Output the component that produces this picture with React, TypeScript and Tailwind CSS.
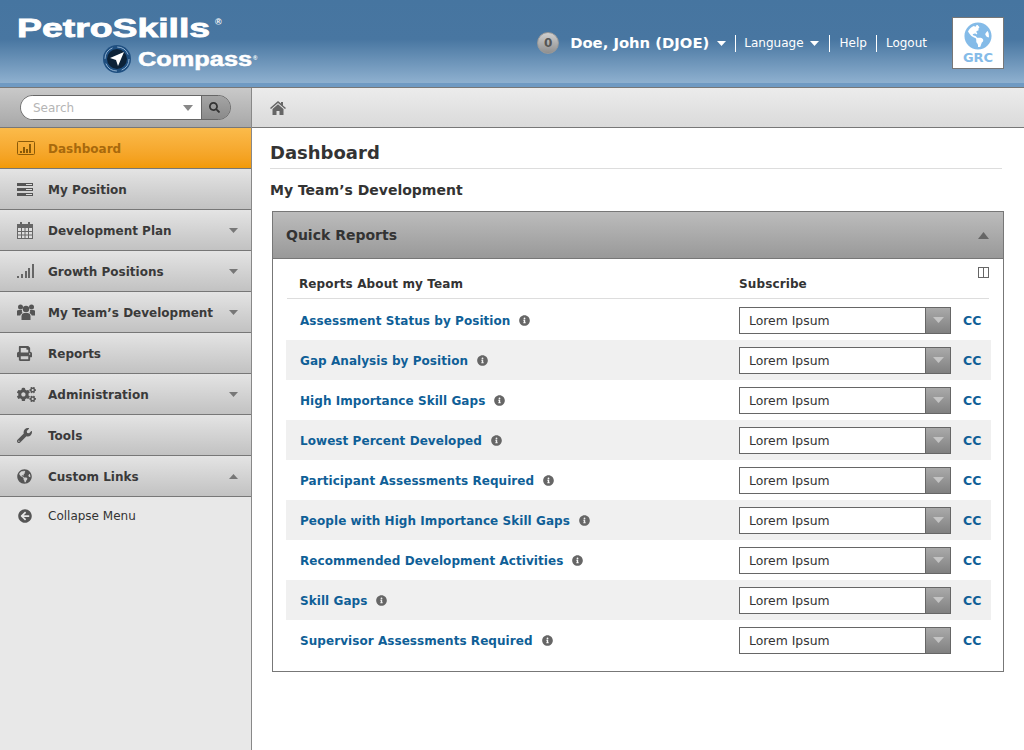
import React from 'react'
import { FaPrint, FaCogs, FaWrench, FaGlobeAmericas, FaArrowCircleLeft, FaInfoCircle, FaSearch } from 'react-icons/fa'

const reports = [
  'Assessment Status by Position',
  'Gap Analysis by Position',
  'High Importance Skill Gaps',
  'Lowest Percent Developed',
  'Participant Assessments Required',
  'People with High Importance Skill Gaps',
  'Recommended Development Activities',
  'Skill Gaps',
  'Supervisor Assessments Required',
]

function Caret({ up, w = 9, h = 5, color = '#777' }: { up?: boolean; w?: number; h?: number; color?: string }) {
  return (
    <svg width={w} height={h} viewBox="0 0 10 6" preserveAspectRatio="none" className="shrink-0">
      <path d={up ? 'M0 6 L5 0 L10 6 Z' : 'M0 0 L10 0 L5 6 Z'} fill={color} />
    </svg>
  )
}

function ChartIcon() {
  return (
    <svg width="18" height="15" viewBox="0 0 18 15">
      <rect x="0.5" y="0.5" width="17" height="13" rx="1" fill="none" stroke="#8a5a08" />
      <rect x="3" y="10" width="2" height="2" fill="#8a5a08" />
      <rect x="6" y="6" width="2" height="6" fill="#8a5a08" />
      <rect x="9" y="8" width="2" height="4" fill="#8a5a08" />
      <rect x="12" y="3" width="2" height="9" fill="#8a5a08" />
    </svg>
  )
}

function PositionIcon() {
  return (
    <svg width="16" height="13" viewBox="0 0 16 13" fill="#555">
      <rect width="16" height="3" />
      <rect y="5" width="16" height="3" />
      <rect y="10" width="16" height="3" />
      <rect x="9" y="1" width="6" height="1" fill="#ddd" />
      <rect x="9" y="6" width="6" height="1" fill="#ddd" />
      <rect x="9" y="11" width="6" height="1" fill="#ddd" />
    </svg>
  )
}

function CalendarIcon() {
  return (
    <svg width="16" height="17" viewBox="0 0 16 17">
      <rect x="0.5" y="2.5" width="15" height="14" fill="#ddd" stroke="#666" />
      <rect x="1" y="3" width="14" height="3" fill="#666" />
      <rect x="3" y="0" width="2" height="4" fill="#666" />
      <rect x="11" y="0" width="2" height="4" fill="#666" />
      <path d="M4.5 6V16M8 6V16M11.5 6V16M1 9.5H15M1 13H15" stroke="#666" />
    </svg>
  )
}

function SignalIcon() {
  return (
    <svg width="17" height="14" viewBox="0 0 17 14" fill="#666">
      <rect x="0" y="12" width="2" height="2" />
      <rect x="4" y="10" width="2" height="4" />
      <rect x="8" y="7" width="2" height="7" />
      <rect x="11" y="4" width="2" height="10" />
      <rect x="15" y="0" width="2" height="14" />
    </svg>
  )
}

function TeamIcon() {
  return (
    <svg width="18" height="16" viewBox="0 0 18 16" fill="#555">
      <circle cx="3.5" cy="3" r="2.5" />
      <circle cx="14.5" cy="3" r="2.5" />
      <circle cx="9" cy="5" r="3.2" />
      <path d="M0 7 Q0 6 2 6 H5 Q4.5 8 5.5 9 Q3.5 10 3.2 11.5 H0 Z" />
      <path d="M18 7 Q18 6 16 6 H13 Q13.5 8 12.5 9 Q14.5 10 14.8 11.5 H18 Z" />
      <path d="M4.5 12 Q4.5 9.5 7 9 H11 Q13.5 9.5 13.5 12 V16 H4.5 Z" />
    </svg>
  )
}

function HomeIcon() {
  return (
    <svg width="16" height="14" viewBox="0 0 16 14" fill="#666">
      <path d="M8 0 L11 2.6 V1 H13 V4.4 L16 7 L15 8 L8 2 L1 8 L0 7 Z" />
      <path d="M2.5 8 L8 3.3 L13.5 8 V14 H9.5 V10 H6.5 V14 H2.5 Z" />
    </svg>
  )
}

function CompassMark() {
  return (
    <svg width="30" height="30" viewBox="0 0 30 30">
      <circle cx="15" cy="15" r="14" fill="#1f4f80" />
      <circle cx="15" cy="15" r="12" fill="none" stroke="#8fb0d0" strokeWidth="1" strokeDasharray="14 4.8" />
      <circle cx="15" cy="15" r="10" fill="#0c2238" />
      <path d="M22 8 L8 14 L14 16 L16 22 Z" fill="#fff" />
    </svg>
  )
}

function NavItem({ icon, label, caret, active }: { icon: React.ReactNode; label: string; caret?: 'down' | 'up'; active?: boolean }) {
  return (
    <div className={`flex h-[41px] items-center border-b border-[#777] pl-[17px] pr-[13px] ${active ? 'bg-gradient-to-b from-[#fbbb4a] to-[#f29a05]' : 'bg-gradient-to-b from-[#e4e4e4] to-[#c2c2c2]'}`}>
      <span className="flex w-[31px] shrink-0 items-center">{icon}</span>
      <span className={`flex-1 whitespace-nowrap pt-[2px] text-[12px] font-bold ${active ? 'text-[#a8690c]' : 'text-[#3a3a3a]'}`}>{label}</span>
      {caret === 'down' && <Caret />}
      {caret === 'up' && <Caret up />}
    </div>
  )
}

function ReportRow({ name, shaded }: { name: string; shaded: boolean }) {
  return (
    <div className={`flex h-10 items-center pl-[14px] ${shaded ? 'bg-[#f0f0f0]' : ''}`}>
      <div className="flex w-[439px] items-center">
        <a className="pt-[1px] text-[12px] font-bold tracking-[0.005em] text-[#0f5f97]">{name}</a>
        <FaInfoCircle className="ml-[9px] mt-[1px] text-[#666]" size={11} />
      </div>
      <div className="flex h-[27px] w-[212px] border border-[#666] bg-white">
        <span className="flex-1 pl-[9px] text-[12.4px] leading-[25px] text-[#333]">Lorem Ipsum</span>
        <span className="flex w-[25px] items-center justify-center border-l border-[#666] bg-gradient-to-b from-[#aaa] to-[#808080]">
          <Caret w={11} h={6} color="#c4c4c4" />
        </span>
      </div>
      <a className="ml-3 pt-[3px] text-[12.5px] font-bold text-[#0f5f97]">CC</a>
    </div>
  )
}

export default function App() {
  return (
    <div className="flex h-[750px] w-[1024px] flex-col overflow-hidden bg-white font-['DejaVu_Sans',Verdana,sans-serif]">
      <header className="relative flex h-[88px] shrink-0 items-start justify-between border-b border-[#777] bg-[linear-gradient(#4675a0_0%,#4876a1_45%,#8eb0cf_95%,#6f9ac3_95.5%,#6f9ac3_100%)]">
        <div className="pl-[17px] pt-[11px] font-['Liberation_Sans',Arial,sans-serif] font-bold text-white">
          <div className="flex items-start">
            <span className="w-[198px] origin-left scale-x-[1.41] whitespace-nowrap text-[26.5px] leading-[34px] [-webkit-text-stroke:0.8px_white]">PetroSkills</span>
            <span className="mt-[6px] text-[9px] leading-[10px]">®</span>
          </div>
          <div className="ml-[85px] mt-[-1px] flex items-center">
            <CompassMark />
            <span className="ml-[6px] w-[115px] origin-left scale-x-[1.3] whitespace-nowrap text-[19.5px] leading-[28px] [-webkit-text-stroke:0.5px_white]">Compass</span>
            <span className="mt-[-2px] text-[6px]">®</span>
          </div>
        </div>
        <div className="flex items-center pr-5 pt-[17px]">
          <div className="flex items-center text-white">
            <span className="mr-[11px] flex h-[22px] w-[22px] items-center justify-center rounded-full border border-[#999] bg-gradient-to-b from-[#d0d0d0] to-[#8f8f8f] text-[12px] font-bold text-[#555]">0</span>
            <span className="text-[14.8px] font-bold">Doe, John (DJOE)</span>
            <span className="ml-2"><Caret color="#fff" /></span>
            <span className="ml-[9px] h-[17px] w-px bg-white" />
            <span className="ml-2 text-[12px]">Language</span>
            <span className="ml-[6px]"><Caret color="#fff" /></span>
            <span className="ml-[10px] h-[17px] w-px bg-white" />
            <span className="ml-[10px] text-[12px]">Help</span>
            <span className="ml-[9px] h-[17px] w-px bg-white" />
            <span className="ml-[9px] text-[12px]">Logout</span>
          </div>
          <div className="ml-[25px] flex h-[52px] w-[52px] flex-col items-center border border-[#777] bg-white pt-[4px]">
            <FaGlobeAmericas className="text-[#84bbe8]" size={28} />
            <span className="text-[13px] font-bold leading-[16px] text-[#84bbe8]">GRC</span>
          </div>
        </div>
      </header>

      <div className="flex min-h-0 flex-1">
        <aside className="flex w-[252px] shrink-0 flex-col border-r border-[#888] bg-[#e8e8e8]">
          <div className="flex h-[39px] shrink-0 items-center bg-gradient-to-b from-[#c9c9c9] to-[#a8a8a8] pl-5">
            <div className="flex h-[25px] w-[211px] overflow-hidden rounded-full border border-[#666]">
              <div className="flex flex-1 items-center bg-white pl-3 pr-[8px]">
                <span className="flex-1 pt-[1px] text-[12px] text-[#b5b5b5]">Search</span>
                <Caret w={10} h={6} color="#888" />
              </div>
              <div className="flex w-[29px] items-center justify-center border-l border-[#666] bg-gradient-to-b from-[#a5a5a5] to-[#8a8a8a] pr-1">
                <FaSearch className="text-[#333]" size={11} />
              </div>
            </div>
          </div>
          <div className="border-t border-[#777]">
            <NavItem active icon={<ChartIcon />} label="Dashboard" />
            <NavItem icon={<PositionIcon />} label="My Position" />
            <NavItem icon={<CalendarIcon />} label="Development Plan" caret="down" />
            <NavItem icon={<SignalIcon />} label="Growth Positions" caret="down" />
            <NavItem icon={<TeamIcon />} label="My Team’s Development" caret="down" />
            <NavItem icon={<FaPrint className="text-[#555]" size={15} />} label="Reports" />
            <NavItem icon={<FaCogs className="text-[#555]" size={19} />} label="Administration" caret="down" />
            <NavItem icon={<FaWrench className="text-[#555]" size={15} />} label="Tools" />
            <NavItem icon={<FaGlobeAmericas className="text-[#555]" size={15} />} label="Custom Links" caret="up" />
          </div>
          <div className="flex h-[38px] items-center pl-[18px] text-[12px] text-[#333]">
            <span className="flex w-[30px] items-center"><FaArrowCircleLeft className="text-[#555]" size={14} /></span>
            Collapse Menu
          </div>
        </aside>

        <main className="flex min-w-0 flex-1 flex-col">
          <div className="flex h-[40px] shrink-0 items-center border-b border-[#777] bg-gradient-to-b from-[#ececec] to-[#dadada] pl-[18px]">
            <HomeIcon />
          </div>
          <div className="pl-[18px] pr-[22px]">
            <h1 className="mt-[12px] border-b border-[#ddd] pb-[2px] text-[18px] font-bold leading-[26px] text-[#333]">Dashboard</h1>
            <h2 className="mt-[11px] text-[14px] font-bold leading-[20px] text-[#333]">My Team’s Development</h2>
            <section className="ml-[2px] mr-[-2px] mt-[11px] h-[461px] border border-[#777]">
              <div className="flex h-[47px] items-center justify-between border-b border-[#777] bg-gradient-to-b from-[#bcbcbc] to-[#999] pl-[13px] pr-[14px]">
                <span className="text-[14px] font-bold text-[#333]">Quick Reports</span>
                <Caret up w={11} h={7} color="#666" />
              </div>
              <div className="relative pl-[13px] pr-[12px]">
                <svg className="absolute right-[14px] top-[8px]" width="11" height="11" viewBox="0 0 11 11" fill="none" stroke="#666">
                  <rect x="0.5" y="0.5" width="10" height="10" />
                  <path d="M5.5 0.5V10.5" />
                </svg>
                <div className="ml-[1px] mr-[2px] flex h-[40px] items-end border-b border-[#ddd] pb-[5px] pl-[12px] text-[12px] font-bold tracking-[0.01em] text-[#333]">
                  <span className="w-[440px]">Reports About my Team</span>
                  <span>Subscribe</span>
                </div>
                <div className="mt-px">
                  {reports.map((name, i) => (
                    <ReportRow key={name} name={name} shaded={i % 2 === 1} />
                  ))}
                </div>
              </div>
            </section>
          </div>
        </main>
      </div>
    </div>
  )
}
